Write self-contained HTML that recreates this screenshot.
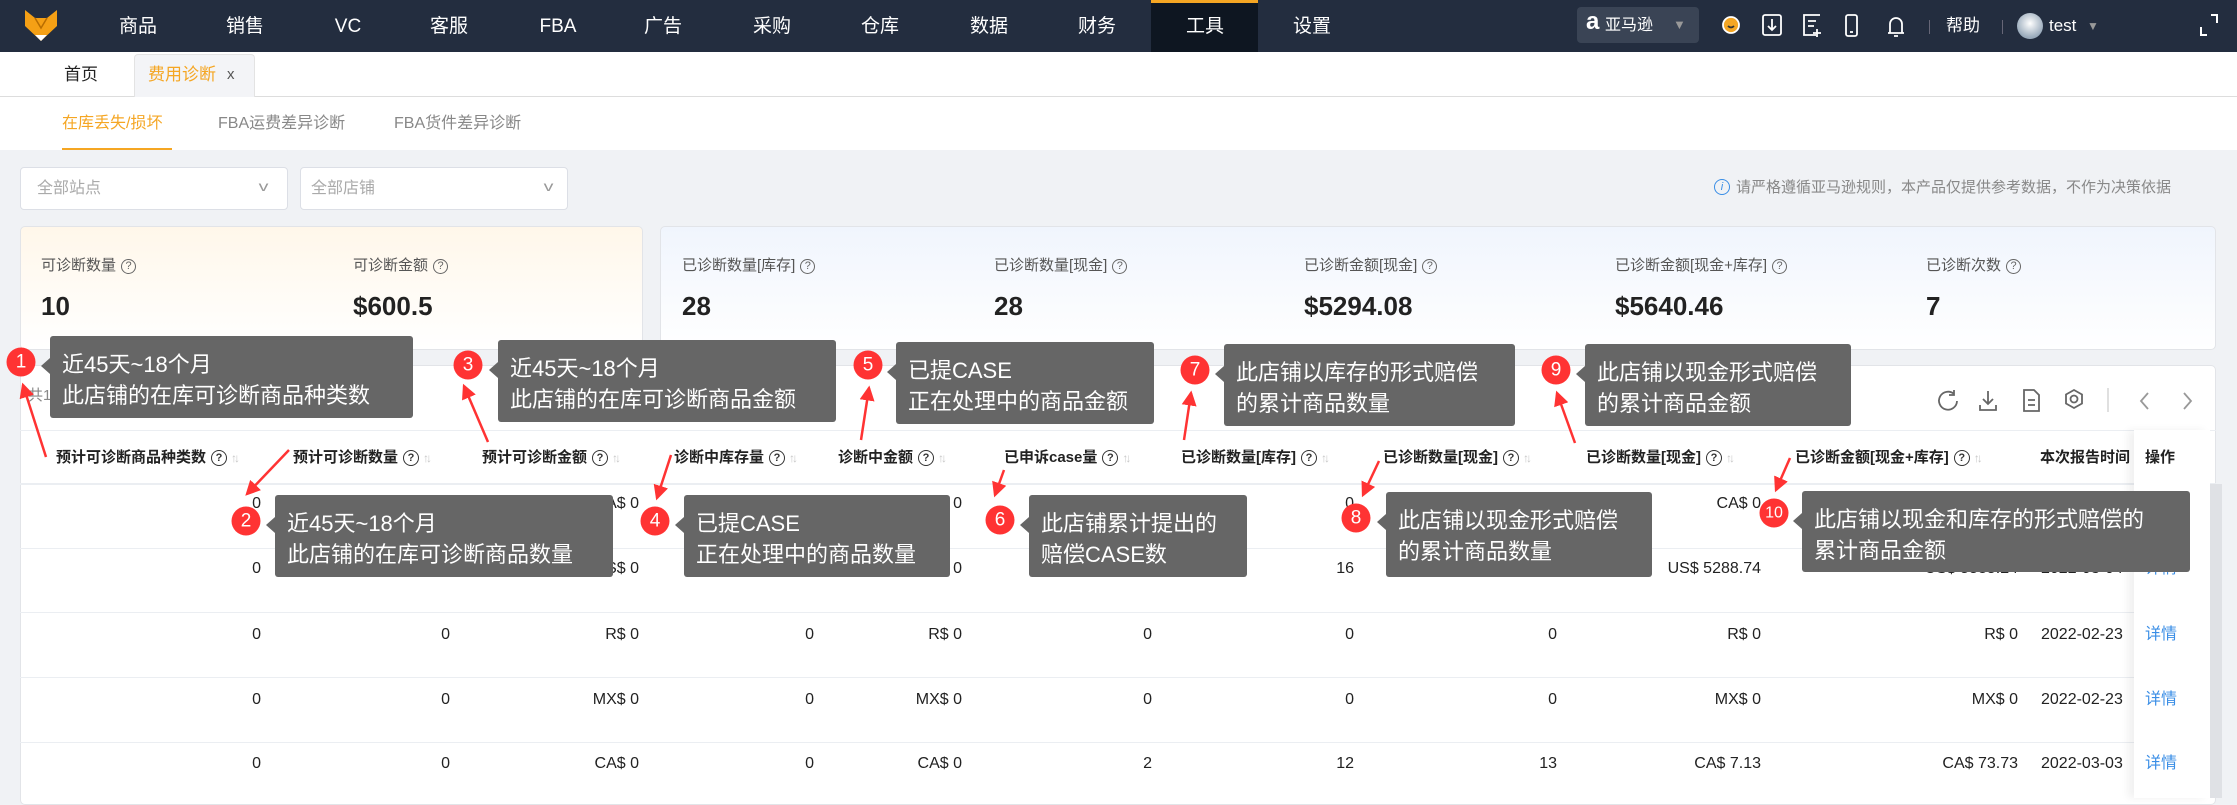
<!DOCTYPE html>
<html><head><meta charset="utf-8"><style>
*{margin:0;padding:0;box-sizing:border-box}
body{width:2237px;height:798px;overflow:hidden;position:relative;background:#f0f2f5;font-family:"Liberation Sans","Noto Sans CJK SC",sans-serif;color:#222}
.a{position:absolute;white-space:nowrap}
.nav{left:0;top:0;width:2237px;height:52px;background:#232d3f}
.mi{top:0;height:52px;line-height:54px;font-size:19px;color:#fff;transform:translateX(-50%)}
.q{display:inline-block;width:15px;height:15px;border:1.3px solid #666;border-radius:50%;font-size:11px;line-height:13px;text-align:center;color:#666;vertical-align:middle;margin-left:5px}
.lbl{font-size:15px;color:#555;top:256px;line-height:20px}
.val{font-size:26px;font-weight:bold;color:#222;top:290px;line-height:32px}
.th{top:448px;font-size:15px;color:#222;font-weight:bold;line-height:20px}
.th .q{border-color:#333;color:#333;width:16px;height:16px;line-height:14px}
.srt{display:inline-block;color:#c8c8c8;font-size:12px;margin-left:4px;letter-spacing:-3px;vertical-align:middle}
.td{font-size:16px;color:#222;line-height:20px}
.tip{background:#666;color:#fff;font-size:22px;line-height:31px;padding:13px 0 0 12px;border-radius:3px;white-space:nowrap}
.tip:before{content:"";position:absolute;left:-9px;top:22px;border-style:solid;border-width:8px 9px 8px 0;border-color:transparent #666 transparent transparent}
.c{width:29px;height:29px;border-radius:50%;background:#f33;color:#fff;font-size:19px;line-height:29px;text-align:center;transform:translate(-50%,-50%)}
.c.s{font-size:16px}
.ln{left:20px;width:2196px;height:1px;background:#ebeef2}
</style></head><body>
<div class="a nav"></div>
<svg class="a" style="left:24px;top:8px" width="34" height="33" viewBox="0 0 34 33"><path d="M1 2 L11 10 L23 10 L33 2 L33 18 L17 33 L1 18Z" fill="#f5a015"/><path d="M11 10 L17 20 L23 10" fill="none" stroke="#b86d00" stroke-width="1.5"/><path d="M11 27 L17 33 L23 27Z" fill="#fff"/></svg>
<div class="a" style="left:1151px;top:0;width:107px;height:52px;background:#0e1621;border-top:3px solid #f5a623"></div>
<div class="a mi" style="left:138px">商品</div>
<div class="a mi" style="left:245px">销售</div>
<div class="a mi" style="left:348px">VC</div>
<div class="a mi" style="left:449px">客服</div>
<div class="a mi" style="left:558px">FBA</div>
<div class="a mi" style="left:663px">广告</div>
<div class="a mi" style="left:772px">采购</div>
<div class="a mi" style="left:880px">仓库</div>
<div class="a mi" style="left:989px">数据</div>
<div class="a mi" style="left:1097px">财务</div>
<div class="a mi" style="left:1205px">工具</div>
<div class="a mi" style="left:1312px">设置</div>
<div class="a" style="left:1577px;top:7px;width:122px;height:36px;background:#3a4455;border-radius:4px"></div>
<div class="a" style="left:1586px;top:7px;color:#fff;font-size:24px;font-weight:bold;line-height:30px">a</div>
<div class="a" style="left:1605px;top:15px;color:#fff;font-size:16px;line-height:22px">亚马逊</div>
<div class="a" style="left:1673px;top:16px;color:#999;font-size:13px;line-height:18px">▼</div>
<svg class="a" style="left:1720px;top:13px" width="200" height="26" viewBox="0 0 200 26" fill="none" stroke="#fff" stroke-width="1.8"><circle cx="11" cy="12" r="8" fill="#f5a623" stroke="#fff"/><path d="M8 13 q3 3 6 0" stroke="#333"/><rect x="43" y="2" width="18" height="20" rx="2"/><path d="M52 6v11m-4-4l4 4 4-4"/><path d="M100 2h-16v20h12M88 8h8M88 13h6M97 16v8M93 20h8"/><rect x="126" y="2" width="11" height="21" rx="2"/><path d="M130 19h3"/><path d="M170 20v-9a6 6 0 0 1 12 0v9zM168 20h16M174 23h4"/></svg>
<div class="a" style="left:1929px;top:20px;width:1px;height:14px;background:#667"></div>
<div class="a" style="left:1946px;top:15px;color:#fff;font-size:17px;line-height:22px">帮助</div>
<div class="a" style="left:2002px;top:20px;width:1px;height:14px;background:#667"></div>
<div class="a" style="left:2017px;top:13px;width:26px;height:26px;border-radius:50%;background:radial-gradient(circle at 50% 40%,#fff,#9ab 70%)"></div>
<div class="a" style="left:2049px;top:15px;color:#fff;font-size:17px;line-height:22px">test</div>
<div class="a" style="left:2087px;top:18px;color:#999;font-size:12px;line-height:16px">▼</div>
<svg class="a" style="left:2199px;top:13px" width="20" height="24" fill="none" stroke="#fff" stroke-width="2"><path d="M12 2h6v8M2 14v8h6"/></svg>
<!-- tab bar -->
<div class="a" style="left:0;top:52px;width:2237px;height:45px;background:#fff;border-bottom:1px solid #ddd"></div>
<div class="a" style="left:64px;top:64px;font-size:17px;color:#222;line-height:22px">首页</div>
<div class="a" style="left:134px;top:54px;width:121px;height:43px;background:#f3f4f7;border:1px solid #e3e3e3;border-bottom:none;border-radius:4px 4px 0 0"></div>
<div class="a" style="left:148px;top:64px;font-size:17px;color:#f5a623;line-height:22px">费用诊断</div>
<div class="a" style="left:227px;top:64px;font-size:15px;color:#555;line-height:22px">x</div>
<div class="a" style="left:0;top:97px;width:2237px;height:53px;background:#fff"></div>
<div class="a" style="left:62px;top:113px;font-size:16px;color:#f5a623;line-height:22px">在库丢失/损坏</div>
<div class="a" style="left:62px;top:148px;width:110px;height:2px;background:#f5a623"></div>
<div class="a" style="left:218px;top:113px;font-size:16px;color:#888;line-height:22px">FBA运费差异诊断</div>
<div class="a" style="left:394px;top:113px;font-size:16px;color:#888;line-height:22px">FBA货件差异诊断</div>
<!-- filters -->
<div class="a" style="left:20px;top:167px;width:268px;height:43px;background:#fff;border:1px solid #dcdfe6;border-radius:4px"></div>
<div class="a" style="left:37px;top:178px;font-size:16px;color:#aaa;line-height:22px">全部站点</div>
<div class="a" style="left:260px;top:176px;font-size:14px;color:#999;transform:scaleX(1.4);line-height:20px">v</div>
<div class="a" style="left:300px;top:167px;width:268px;height:43px;background:#fff;border:1px solid #dcdfe6;border-radius:4px"></div>
<div class="a" style="left:311px;top:178px;font-size:16px;color:#aaa;line-height:22px">全部店铺</div>
<div class="a" style="left:545px;top:176px;font-size:14px;color:#999;transform:scaleX(1.4);line-height:20px">v</div>
<div class="a" style="left:1714px;top:179px;width:16px;height:16px;border:1.3px solid #3a8ee6;border-radius:50%;color:#3a8ee6;font-size:11px;text-align:center;line-height:14px;font-style:italic">i</div>
<div class="a" style="left:1736px;top:177px;font-size:15px;color:#888;line-height:22px">请严格遵循亚马逊规则，本产品仅提供参考数据，不作为决策依据</div>
<!-- cards -->
<div class="a" style="left:20px;top:226px;width:623px;height:124px;border:1px solid #e2e4e8;border-radius:5px;background:linear-gradient(#fff7ea,#fff)"></div>
<div class="a" style="left:660px;top:226px;width:1556px;height:124px;border:1px solid #e2e4e8;border-radius:5px;background:linear-gradient(#f0f5fd,#fff)"></div>
<div class="a lbl" style="left:41px">可诊断数量<span class="q">?</span></div>
<div class="a lbl" style="left:353px">可诊断金额<span class="q">?</span></div>
<div class="a lbl" style="left:682px">已诊断数量[库存]<span class="q">?</span></div>
<div class="a lbl" style="left:994px">已诊断数量[现金]<span class="q">?</span></div>
<div class="a lbl" style="left:1304px">已诊断金额[现金]<span class="q">?</span></div>
<div class="a lbl" style="left:1615px">已诊断金额[现金+库存]<span class="q">?</span></div>
<div class="a lbl" style="left:1926px">已诊断次数<span class="q">?</span></div>
<div class="a val" style="left:41px">10</div>
<div class="a val" style="left:353px">$600.5</div>
<div class="a val" style="left:682px">28</div>
<div class="a val" style="left:994px">28</div>
<div class="a val" style="left:1304px">$5294.08</div>
<div class="a val" style="left:1615px">$5640.46</div>
<div class="a val" style="left:1926px">7</div>
<!-- table card -->
<div class="a" style="left:20px;top:365px;width:2196px;height:440px;background:#fff;border:1px solid #e2e4e8;border-radius:5px;overflow:hidden"></div>
<div class="a" style="left:28px;top:386px;font-size:15px;color:#888;line-height:20px">共10条</div>
<svg class="a" style="left:1934px;top:388px" width="270" height="26" fill="none" stroke="#666" stroke-width="1.8"><path d="M20 6a9 9 0 1 0 3 7M20 2v5h-5"/><path d="M54 3v13m-5-5l5 5 5-5M46 17v5h16v-5"/><path d="M90 2h10l5 5v16H90z M94 12h7M94 17h7"/><path d="M140 2l8 4.5v9L140 20l-8-4.5v-9z"/><circle cx="140" cy="11" r="3.5"/><path d="M174 0v24" stroke="#ddd"/><path d="M214 5l-7 8 7 8M250 5l7 8-7 8" stroke="#999"/></svg>
<div class="a ln" style="top:430px"></div>
<div class="a ln" style="top:483px;height:2px"></div>
<div class="a ln" style="top:548px"></div>
<div class="a ln" style="top:612px"></div>
<div class="a ln" style="top:677px"></div>
<div class="a ln" style="top:742px"></div>
<div class="a th" style="left:56px">预计可诊断商品种类数<span class="q">?</span><span class="srt">↑↓</span></div>
<div class="a th" style="left:293px">预计可诊断数量<span class="q">?</span><span class="srt">↑↓</span></div>
<div class="a th" style="left:482px">预计可诊断金额<span class="q">?</span><span class="srt">↑↓</span></div>
<div class="a th" style="left:674px">诊断中库存量<span class="q">?</span><span class="srt">↑↓</span></div>
<div class="a th" style="left:838px">诊断中金额<span class="q">?</span><span class="srt">↑↓</span></div>
<div class="a th" style="left:1004px">已申诉case量<span class="q">?</span><span class="srt">↑↓</span></div>
<div class="a th" style="left:1181px">已诊断数量[库存]<span class="q">?</span><span class="srt">↑↓</span></div>
<div class="a th" style="left:1383px">已诊断数量[现金]<span class="q">?</span><span class="srt">↑↓</span></div>
<div class="a th" style="left:1586px">已诊断数量[现金]<span class="q">?</span><span class="srt">↑↓</span></div>
<div class="a th" style="left:1795px">已诊断金额[现金+库存]<span class="q">?</span><span class="srt">↑↓</span></div>
<div class="a" style="left:2040px;top:440px;width:94px;height:40px;overflow:hidden"><div class="a th" style="left:0;top:8px">本次报告时间</div></div>
<div class="a" style="left:2134px;top:430px;width:76px;height:368px;background:#fff;box-shadow:-6px 0 8px rgba(0,0,0,0.06)"></div>
<div class="a th" style="left:2145px">操作</div>
<div class="a" style="left:2210px;top:484px;width:12px;height:314px;background:#dfe1e5"></div>
<div class="a td" style="right:1976px;top:494px">0</div><div class="a td" style="right:1787px;top:494px">0</div><div class="a td" style="right:1598px;top:494px">CA$ 0</div><div class="a td" style="right:1423px;top:494px">0</div><div class="a td" style="right:1275px;top:494px">CA$ 0</div><div class="a td" style="right:1085px;top:494px">0</div><div class="a td" style="right:883px;top:494px">0</div><div class="a td" style="right:680px;top:494px">0</div><div class="a td" style="right:476px;top:494px">CA$ 0</div><div class="a td" style="right:219px;top:494px">CA$ 0</div><div class="a td" style="left:2145px;top:494px;color:#3a8ee6">详情</div>
<div class="a td" style="right:1976px;top:559px">0</div><div class="a td" style="right:1787px;top:559px">0</div><div class="a td" style="right:1598px;top:559px">US$ 0</div><div class="a td" style="right:1423px;top:559px">0</div><div class="a td" style="right:1275px;top:559px">US$ 0</div><div class="a td" style="right:1085px;top:559px">5</div><div class="a td" style="right:883px;top:559px">16</div><div class="a td" style="right:680px;top:559px">15</div><div class="a td" style="right:476px;top:559px">US$ 5288.74</div><div class="a td" style="right:219px;top:559px">US$ 5585.24</div><div class="a td" style="left:2041px;top:559px;width:93px;overflow:hidden">2022-03-04</div><div class="a td" style="left:2145px;top:559px;color:#3a8ee6">详情</div>
<div class="a td" style="right:1976px;top:625px">0</div><div class="a td" style="right:1787px;top:625px">0</div><div class="a td" style="right:1598px;top:625px">R$ 0</div><div class="a td" style="right:1423px;top:625px">0</div><div class="a td" style="right:1275px;top:625px">R$ 0</div><div class="a td" style="right:1085px;top:625px">0</div><div class="a td" style="right:883px;top:625px">0</div><div class="a td" style="right:680px;top:625px">0</div><div class="a td" style="right:476px;top:625px">R$ 0</div><div class="a td" style="right:219px;top:625px">R$ 0</div><div class="a td" style="left:2041px;top:625px;width:93px;overflow:hidden">2022-02-23</div><div class="a td" style="left:2145px;top:625px;color:#3a8ee6">详情</div>
<div class="a td" style="right:1976px;top:690px">0</div><div class="a td" style="right:1787px;top:690px">0</div><div class="a td" style="right:1598px;top:690px">MX$ 0</div><div class="a td" style="right:1423px;top:690px">0</div><div class="a td" style="right:1275px;top:690px">MX$ 0</div><div class="a td" style="right:1085px;top:690px">0</div><div class="a td" style="right:883px;top:690px">0</div><div class="a td" style="right:680px;top:690px">0</div><div class="a td" style="right:476px;top:690px">MX$ 0</div><div class="a td" style="right:219px;top:690px">MX$ 0</div><div class="a td" style="left:2041px;top:690px;width:93px;overflow:hidden">2022-02-23</div><div class="a td" style="left:2145px;top:690px;color:#3a8ee6">详情</div>
<div class="a td" style="right:1976px;top:754px">0</div><div class="a td" style="right:1787px;top:754px">0</div><div class="a td" style="right:1598px;top:754px">CA$ 0</div><div class="a td" style="right:1423px;top:754px">0</div><div class="a td" style="right:1275px;top:754px">CA$ 0</div><div class="a td" style="right:1085px;top:754px">2</div><div class="a td" style="right:883px;top:754px">12</div><div class="a td" style="right:680px;top:754px">13</div><div class="a td" style="right:476px;top:754px">CA$ 7.13</div><div class="a td" style="right:219px;top:754px">CA$ 73.73</div><div class="a td" style="left:2041px;top:754px;width:93px;overflow:hidden">2022-03-03</div><div class="a td" style="left:2145px;top:754px;color:#3a8ee6">详情</div>
<!-- annotations -->
<div class="a tip" style="left:50px;top:336px;width:363px;height:82px">近45天~18个月<br>此店铺的在库可诊断商品种类数</div>
<div class="a tip" style="left:498px;top:340px;width:338px;height:82px">近45天~18个月<br>此店铺的在库可诊断商品金额</div>
<div class="a tip" style="left:896px;top:342px;width:258px;height:82px">已提CASE<br>正在处理中的商品金额</div>
<div class="a tip" style="left:275px;top:495px;width:338px;height:82px">近45天~18个月<br>此店铺的在库可诊断商品数量</div>
<div class="a tip" style="left:684px;top:495px;width:266px;height:82px">已提CASE<br>正在处理中的商品数量</div>
<div class="a tip" style="left:1029px;top:495px;width:218px;height:82px">此店铺累计提出的<br>赔偿CASE数</div>
<div class="a tip" style="left:1224px;top:344px;width:291px;height:82px">此店铺以库存的形式赔偿<br>的累计商品数量</div>
<div class="a tip" style="left:1585px;top:344px;width:266px;height:82px">此店铺以现金形式赔偿<br>的累计商品金额</div>
<div class="a tip" style="left:1386px;top:492px;width:266px;height:85px">此店铺以现金形式赔偿<br>的累计商品数量</div>
<div class="a tip" style="left:1802px;top:491px;width:388px;height:81px">此店铺以现金和库存的形式赔偿的<br>累计商品金额</div>
<div class="a c" style="left:21px;top:362px">1</div>
<div class="a c" style="left:246px;top:521px">2</div>
<div class="a c" style="left:468px;top:365px">3</div>
<div class="a c" style="left:655px;top:521px">4</div>
<div class="a c" style="left:868px;top:365px">5</div>
<div class="a c" style="left:1000px;top:520px">6</div>
<div class="a c" style="left:1195px;top:370px">7</div>
<div class="a c" style="left:1356px;top:518px">8</div>
<div class="a c" style="left:1556px;top:370px">9</div>
<div class="a c s" style="left:1774px;top:513px">10</div>
<svg class="a" style="left:0;top:0" width="2237" height="798">
<defs><marker id="h" markerWidth="6" markerHeight="6" refX="5" refY="3" orient="auto"><path d="M0 0L6 3L0 6z" fill="#f33"/></marker></defs>
<g stroke="#f33" stroke-width="2.5" marker-end="url(#h)">
<line x1="46" y1="457" x2="23" y2="385"/>
<line x1="289" y1="450" x2="247" y2="494"/>
<line x1="488" y1="442" x2="464" y2="386"/>
<line x1="671" y1="455" x2="657" y2="498"/>
<line x1="861" y1="440" x2="869" y2="388"/>
<line x1="1004" y1="470" x2="995" y2="495"/>
<line x1="1184" y1="440" x2="1191" y2="393"/>
<line x1="1379" y1="461" x2="1363" y2="495"/>
<line x1="1575" y1="443" x2="1557" y2="393"/>
<line x1="1790" y1="458" x2="1776" y2="490"/>
</g></svg>
</body></html>
